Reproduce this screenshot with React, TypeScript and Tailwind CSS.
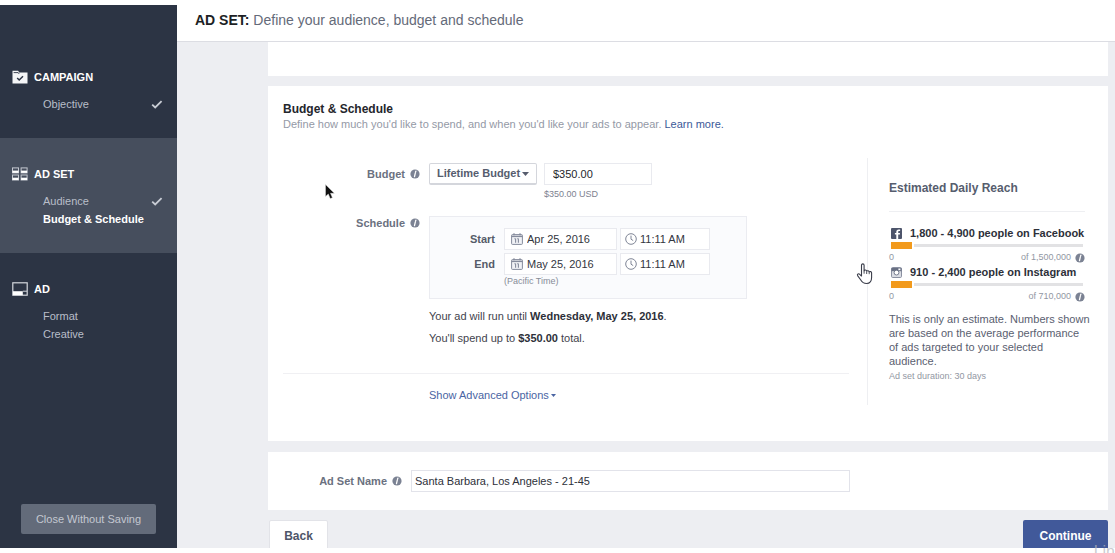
import type { ReactNode } from 'react';

function InfoIcon() {
  return (
    <svg viewBox="0 0 10 10" className="h-[10px] w-[10px] shrink-0" aria-hidden="true">
      <circle cx="5" cy="5" r="4.6" fill="#7b8293" />
      <path d="M5.9 2.1 L5.5 3.3 M5.3 4.2 L4.5 7.7" stroke="#fff" strokeWidth="1.3" strokeLinecap="round" />
    </svg>
  );
}

function FolderIcon() {
  return (
    <svg viewBox="0 0 16 14" className="h-[14px] w-4" aria-hidden="true">
      <path d="M.5 13.5V.8h5.6l1.2 1.6h8.2v11.1z" fill="#f4f5f7" />
      <path d="M1.6 2.6h4.6l.9 1.3" stroke="#2c3444" strokeWidth=".9" fill="none" />
      <path d="M5.2 8l2 2 3.8-3.8" stroke="#2c3444" strokeWidth="1.5" fill="none" />
    </svg>
  );
}

function GridIcon() {
  return (
    <svg viewBox="0 0 16 14" className="h-[14px] w-4" aria-hidden="true">
      {[0, 8.6].map((x) =>
        [0.4, 7.5].map((y) => (
          <g key={`${x}-${y}`}>
            <rect x={x + 0.5} y={y + 0.5} width="6" height="5" fill="none" stroke="#c5c9d1" />
            <rect x={x + 0.5} y={y + 3.2} width="6" height="2.3" fill="#fff" />
          </g>
        )),
      )}
    </svg>
  );
}

function AdIcon() {
  return (
    <svg viewBox="0 0 16 14" className="h-[14px] w-4" aria-hidden="true">
      <rect x=".8" y=".8" width="14.4" height="12.4" fill="none" stroke="#d5d8de" strokeWidth="1.2" />
      <path d="M1 9.2h9.8v4H1z" fill="#fff" />
      <path d="M10.8 9.2H15" stroke="#d5d8de" />
    </svg>
  );
}

function Check() {
  return (
    <svg viewBox="0 0 12 9" className="h-[9px] w-3" aria-hidden="true">
      <path d="M1.2 4.6l3 2.9 6.4-6.4" fill="none" stroke="#c9cdd5" strokeWidth="1.8" />
    </svg>
  );
}

function CalendarIcon() {
  return (
    <svg viewBox="0 0 12 12" className="h-3 w-3 shrink-0" aria-hidden="true">
      <rect x=".6" y="1.6" width="10.8" height="9.8" rx=".8" fill="#f1f2f6" stroke="#858b9c" />
      <path d="M.6 3.4h10.8" stroke="#858b9c" strokeWidth="1.4" />
      <path d="M3 .2v2M9 .2v2" stroke="#858b9c" strokeWidth="1.2" />
      <path d="M4.6 5.4v4.4M7.4 5.4v4.4M3.4 5.8h1M6.2 5.8h1" stroke="#858b9c" strokeWidth="1.1" />
    </svg>
  );
}

function ClockIcon() {
  return (
    <svg viewBox="0 0 12 12" className="h-3 w-3 shrink-0" aria-hidden="true">
      <circle cx="6" cy="6" r="5.3" fill="none" stroke="#7f8596" />
      <path d="M6 2.6V6.2l2.2 1.4" fill="none" stroke="#7f8596" />
    </svg>
  );
}

function FacebookIcon() {
  return (
    <svg viewBox="0 0 11 11" className="h-[11px] w-[11px]" aria-hidden="true">
      <rect width="11" height="11" rx="1" fill="#4d556b" />
      <path d="M7.2 11V6.6h1.7V5H7.2V4c0-.7.3-1 1-1h.9V1.4H7.7C6 1.4 5.3 2.3 5.3 3.8V5H3.9v1.6h1.4V11z" fill="#fff" />
    </svg>
  );
}

function InstagramIcon() {
  return (
    <svg viewBox="0 0 11 11" className="h-[11px] w-[11px]" aria-hidden="true">
      <rect x=".5" y=".5" width="10" height="10" rx="1.2" fill="#d9dce3" stroke="#8a90a1" />
      <path d="M.5 1h10v3.2H.5z" fill="#697084" />
      <rect x="7.4" y="1.5" width="2" height="1.7" fill="#fff" />
      <circle cx="5.5" cy="5.6" r="2.4" fill="#fff" stroke="#697084" strokeWidth=".9" />
    </svg>
  );
}

type Item = { name: string; done?: boolean; current?: boolean };

function Step({ icon, title, items, active }: { icon: ReactNode; title: string; items: Item[]; active?: boolean }) {
  return (
    <section className={active ? 'bg-[#464e5d] pt-7 pb-[25px]' : 'pt-7 pb-[25px]'}>
      <h2 className="flex items-center gap-[6px] pl-3 text-[11px] leading-4 font-bold text-white">
        {icon}
        {title}
      </h2>
      <ul className="mt-[10px] pr-[14px] pl-[43px]">
        {items.map((item) => (
          <li key={item.name} className="flex h-[18px] items-center justify-between">
            <a
              href="#"
              className={item.current ? 'text-[11px] font-bold whitespace-nowrap text-white' : 'text-[11px] text-[#b9bec9]'}
            >
              {item.name}
            </a>
            {item.done && <Check />}
          </li>
        ))}
      </ul>
    </section>
  );
}

function DateRow({ id, label, date }: { id: string; label: string; date: string }) {
  return (
    <div className="flex items-center">
      <label htmlFor={id} className="w-[66px] pr-[9px] text-right text-[11px] font-bold text-[#555b69]">
        {label}
      </label>
      <div className="flex h-[22px] w-[113px] items-center gap-1 border border-[#e9eaef] bg-white pl-[6px]">
        <CalendarIcon />
        <input id={id} defaultValue={date} className="w-full min-w-0 bg-transparent text-[11px] text-[#33363e] outline-none" />
      </div>
      <div className="ml-[3px] flex h-[22px] w-[90px] items-center gap-[3px] border border-[#e9eaef] bg-white pl-1">
        <ClockIcon />
        <input
          aria-label={`${label} time`}
          defaultValue="11:11 AM"
          className="w-full min-w-0 bg-transparent text-[11px] text-[#33363e] outline-none"
        />
      </div>
    </div>
  );
}

function Reach({ icon, text, total }: { icon: ReactNode; text: string; total: string }) {
  return (
    <div className="h-[39px]">
      <div className="flex h-[15px] items-center gap-2 pl-[2px] text-[11px] font-bold whitespace-nowrap text-[#2d3039]">
        {icon}
        {text}
      </div>
      <div className="mr-[2px] ml-[2px] flex h-[9px] items-center gap-[2px]">
        <div className="h-[7px] w-[21px] bg-[#f29a1c]" />
        <div className="h-[3px] flex-1 bg-[#e2e2e4]" />
      </div>
      <div className="flex h-4 items-center text-[9px] text-[#9297a3]">
        <span className="flex-1">0</span>
        <span className="mr-1">{total}</span>
        <InfoIcon />
      </div>
    </div>
  );
}

export default function App() {
  return (
    <div className="relative h-screen overflow-hidden bg-white py-[5px] font-['Liberation_Sans',Arial,sans-serif] text-[11px] text-[#3f434d]">
      <div className="flex h-full">
        <nav className="flex w-[177px] shrink-0 flex-col bg-[#2c3444]">
          <div className="pt-[36px]">
            <Step icon={<FolderIcon />} title="CAMPAIGN" items={[{ name: 'Objective', done: true }]} />
          </div>
          <Step
            active
            icon={<GridIcon />}
            title="AD SET"
            items={[
              { name: 'Audience', done: true },
              { name: 'Budget & Schedule', current: true },
            ]}
          />
          <Step icon={<AdIcon />} title="AD" items={[{ name: 'Format' }, { name: 'Creative' }]} />
          <button
            type="button"
            className="mx-[21px] mt-auto mb-[14px] h-[30px] rounded-[2px] bg-[#636b7a] text-[11px] whitespace-nowrap text-[#c3c8d1]"
          >
            Close Without Saving
          </button>
        </nav>

        <div className="flex min-w-0 flex-1 flex-col">
          <header className="h-[37px] shrink-0 border-b border-[#dcdde3] pt-[5px] pl-[18px]">
            <h1 className="text-[14px] leading-[20px] text-[#646a79]">
              <strong className="text-[#1d1f25]">AD SET:</strong> Define your audience, budget and schedule
            </h1>
          </header>

          <main className="min-h-0 flex-1 overflow-hidden bg-[#edeef2] pr-[7px] pl-[91px]">
            <div className="h-[34px] bg-white" />

            <section className="mt-[10px] bg-white px-[15px] pt-[15px] pb-9">
              <h2 className="text-[12px] leading-4 font-bold text-[#24262c]">Budget &amp; Schedule</h2>
              <p className="text-[11px] leading-[14px] text-[#9499a6]">
                Define how much you'd like to spend, and when you'd like your ads to appear.{' '}
                <a href="#" className="text-[#3b5998]">
                  Learn more.
                </a>
              </p>

              <div className="mt-[27px] flex">
                <div className="min-w-0 flex-1 pt-[5px]">
                  <div className="flex">
                    <label
                      htmlFor="budget"
                      className="flex h-[22px] w-[146px] shrink-0 items-center justify-end gap-[5px] pr-[9px] font-bold text-[#6b7180]"
                    >
                      Budget <InfoIcon />
                    </label>
                    <div className="relative h-[22px] w-[108px]">
                      <select
                        aria-label="Budget type"
                        className="h-full w-full appearance-none rounded-[2px] border border-b-2 border-[#d4d6dc] bg-white pl-[7px] text-[11px] font-bold text-[#565d6e]"
                      >
                        <option>Lifetime Budget</option>
                        <option>Daily Budget</option>
                      </select>
                      <svg viewBox="0 0 7 4" className="pointer-events-none absolute top-[9px] right-[8px] h-1 w-[7px]" aria-hidden="true">
                        <path d="M0 0h7L3.5 4z" fill="#565d6e" />
                      </svg>
                    </div>
                    <div className="ml-[7px]">
                      <input
                        id="budget"
                        defaultValue="$350.00"
                        className="block h-[22px] w-[108px] border border-[#e9eaef] bg-white pl-2 text-[11px] text-[#24262c]"
                      />
                      <p className="mt-[2px] text-[9px] leading-[14px] text-[#7d828f]">$350.00 USD</p>
                    </div>
                  </div>

                  <div className="mt-[15px] flex">
                    <div className="flex h-[14px] w-[146px] shrink-0 items-center justify-end gap-[5px] pr-[9px] font-bold text-[#6b7180]">
                      Schedule <InfoIcon />
                    </div>
                    <div className="h-[83px] w-[318px] border border-[#ebecf1] bg-[#fafbfd] pt-[11px] pl-2">
                      <DateRow id="start" label="Start" date="Apr 25, 2016" />
                      <div className="mt-[3px]">
                        <DateRow id="end" label="End" date="May 25, 2016" />
                      </div>
                      <p className="pl-[66px] text-[9px] leading-[12px] text-[#878c98]">(Pacific Time)</p>
                    </div>
                  </div>

                  <div className="mt-[6px] pl-[146px] leading-[22px]">
                    <p>
                      Your ad will run until <strong className="text-[#2d3039]">Wednesday, May 25, 2016</strong>.
                    </p>
                    <p>
                      You'll spend up to <strong className="text-[#2d3039]">$350.00</strong> total.
                    </p>
                  </div>

                  <div className="mt-[24px] border-t border-[#f0f0f3] pt-[13px] pl-[146px]">
                    <a href="#" className="flex items-center gap-[2px] leading-4 text-[#4a65a3]">
                      Show Advanced Options
                      <svg viewBox="0 0 5 3" className="h-[3px] w-[5px]" aria-hidden="true">
                        <path d="M0 0h5L2.5 3z" fill="#4a65a3" />
                      </svg>
                    </a>
                  </div>
                </div>

                <aside className="ml-[18px] h-[247px] w-[226px] shrink-0 border-l border-[#eeeff2] pr-2 pl-[21px]">
                  <h3 className="border-b border-[#eeeff2] pt-[22px] pb-[15px] text-[12px] leading-4 font-bold text-[#565d6e]">
                    Estimated Daily Reach
                  </h3>
                  <div className="pt-[14px]">
                    <Reach icon={<FacebookIcon />} text="1,800 - 4,900 people on Facebook" total="of 1,500,000" />
                    <Reach icon={<InstagramIcon />} text="910 - 2,400 people on Instagram" total="of 710,000" />
                  </div>
                  <p className="mt-2 text-[11px] leading-[14px] whitespace-nowrap text-[#5a6070]">
                    This is only an estimate. Numbers shown
                    <br />
                    are based on the average performance
                    <br />
                    of ads targeted to your selected
                    <br />
                    audience.
                  </p>
                  <p className="mt-[2px] text-[9px] leading-[13px] text-[#9297a3]">Ad set duration: 30 days</p>
                </aside>
              </div>
            </section>

            <section className="mt-[11px] flex h-[58px] items-center bg-white">
              <label
                htmlFor="name"
                className="flex w-[143px] shrink-0 items-center justify-end gap-[5px] pr-[9px] font-bold text-[#6b7180]"
              >
                Ad Set Name <InfoIcon />
              </label>
              <input
                id="name"
                defaultValue="Santa Barbara, Los Angeles - 21-45"
                className="mr-[258px] h-[22px] min-w-0 flex-1 border border-[#e2e3ea] bg-white pl-[3px] text-[11px] text-[#2d3039]"
              />
            </section>

            <div className="mt-[10px] flex justify-between pl-px">
              <button type="button" className="h-8 w-[59px] rounded-[2px] border border-[#e2e3e8] bg-white text-[12px] font-bold text-[#4e5568]">
                Back
              </button>
              <button type="button" className="h-8 w-[85px] rounded-[2px] bg-[#41599a] text-[12px] font-bold text-white">
                Continue
              </button>
            </div>
          </main>
        </div>
      </div>

      <span className="absolute right-0 bottom-[-9px] text-[16px] leading-5 text-[#b4b6bd]/70" aria-hidden="true">
        Lin
      </span>

      <svg viewBox="0 0 10 16" className="absolute top-[184px] left-[325px] h-4 w-[10px]" aria-hidden="true">
        <path d="M.5.5v12l2.8-2.5 1.9 4.6 2.2-.9-1.9-4.4h3.8z" fill="#111" stroke="#ddd" strokeWidth=".5" />
      </svg>
      <svg viewBox="0 0 17 22" className="absolute top-[263px] left-[856px] h-[22px] w-[17px]" aria-hidden="true">
        <path
          d="M5.5 13V2.3c0-1.9 2.6-1.9 2.6 0v5.4c.4-1 2.400-.9 2.6.5.5-.8 2.3-.6 2.5.6.7-.6 2.4-.3 2.4 1.2v4.5c0 3.7-2 6-5 6-3.5 0-4.7-1.5-6-3.8L1.6 12.600c-.8-1.5 1.1-2.5 2.1-1.300z"
          fill="#fff"
          stroke="#3a3d4a"
          strokeWidth="1.1"
          strokeLinejoin="round"
        />
        <path d="M8.1 7.7v3M10.7 8.5v2.5M13.2 9v2.2" stroke="#3a3d4a" strokeWidth=".9" />
      </svg>
    </div>
  );
}
